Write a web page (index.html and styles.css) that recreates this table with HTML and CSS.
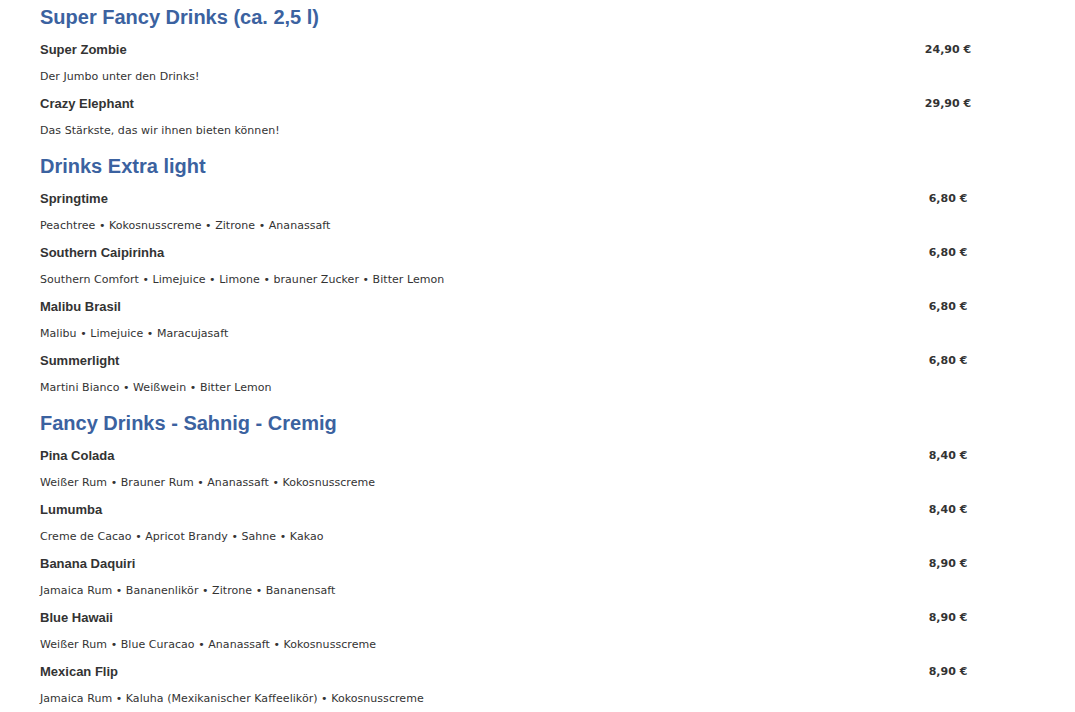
FILE: index.html
```html
<!DOCTYPE html>
<html lang="de">
<head>
  <meta charset="UTF-8" />
  <title>Getränkekarte</title>
  <link rel="stylesheet" href="styles.css">
</head>
<body>
  <div class="menu">
    <div class="section">
      <h2 class="title">Super Fancy Drinks (ca. 2,5 l)</h2>
      <div class="item">
        <div class="name">Super Zombie</div>
        <div class="price">24,90 €</div>
        <div class="desc">Der Jumbo unter den Drinks!</div>
      </div>
      <div class="item">
        <div class="name">Crazy Elephant</div>
        <div class="price">29,90 €</div>
        <div class="desc">Das Stärkste, das wir ihnen bieten können!</div>
      </div>
    </div>

    <div class="section">
      <h2 class="title">Drinks Extra light</h2>
      <div class="item">
        <div class="name">Springtime</div>
        <div class="price">6,80 €</div>
        <div class="desc">Peachtree • Kokosnusscreme • Zitrone • Ananassaft</div>
      </div>
      <div class="item">
        <div class="name">Southern Caipirinha</div>
        <div class="price">6,80 €</div>
        <div class="desc">Southern Comfort • Limejuice • Limone • brauner Zucker • Bitter Lemon</div>
      </div>
      <div class="item">
        <div class="name">Malibu Brasil</div>
        <div class="price">6,80 €</div>
        <div class="desc">Malibu • Limejuice • Maracujasaft</div>
      </div>
      <div class="item">
        <div class="name">Summerlight</div>
        <div class="price">6,80 €</div>
        <div class="desc">Martini Bianco • Weißwein • Bitter Lemon</div>
      </div>
    </div>

    <div class="section">
      <h2 class="title">Fancy Drinks - Sahnig - Cremig</h2>
      <div class="item">
        <div class="name">Pina Colada</div>
        <div class="price">8,40 €</div>
        <div class="desc">Weißer Rum • Brauner Rum • Ananassaft • Kokosnusscreme</div>
      </div>
      <div class="item">
        <div class="name">Lumumba</div>
        <div class="price">8,40 €</div>
        <div class="desc">Creme de Cacao • Apricot Brandy • Sahne • Kakao</div>
      </div>
      <div class="item">
        <div class="name">Banana Daquiri</div>
        <div class="price">8,90 €</div>
        <div class="desc">Jamaica Rum • Bananenlikör • Zitrone • Bananensaft</div>
      </div>
      <div class="item">
        <div class="name">Blue Hawaii</div>
        <div class="price">8,90 €</div>
        <div class="desc">Weißer Rum • Blue Curacao • Ananassaft • Kokosnusscreme</div>
      </div>
      <div class="item">
        <div class="name">Mexican Flip</div>
        <div class="price">8,90 €</div>
        <div class="desc">Jamaica Rum • Kaluha (Mexikanischer Kaffeelikör) • Kokosnusscreme</div>
      </div>
    </div>
  </div>
</body>
</html>
```

FILE: styles.css
```css
body {
  margin: 0;
  background: #fff;
  color: #333;
  font-family: 'DejaVu Sans', Verdana, sans-serif;
}

.menu {
  width: 958px;
  padding: 4px 0 0 40px;
}

.section + .section {
  margin-top: 10px;
}

.title {
  margin: 0 0 7px;
  font-family: 'Liberation Sans', Arial, sans-serif;
  font-size: 20px;
  font-weight: bold;
  line-height: 26px;
  color: #3b62a0;
}

.item {
  display: grid;
  grid-template-columns: 1fr 100px;
  margin-bottom: 2px;
}

.name {
  font-family: 'Liberation Sans', Arial, sans-serif;
  font-size: 13px;
  font-weight: bold;
  line-height: 26px;
  color: #333;
}

.price {
  font-size: 11px;
  font-weight: bold;
  line-height: 26px;
  text-align: center;
  color: #333;
}

.desc {
  grid-column: 1 / 3;
  padding-top: 1px;
  margin-bottom: -1px;
  font-size: 11px;
  line-height: 26px;
  letter-spacing: 0.05px;
  color: #333;
}
```
